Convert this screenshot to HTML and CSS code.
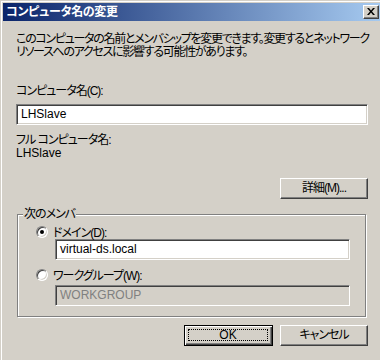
FILE: index.html
```html
<!DOCTYPE html>
<html lang="ja">
<head>
<meta charset="utf-8">
<link rel="stylesheet" href="styles.css">
</head>
<body>
<div class="window">
  <div class="titlebar">
    <span class="title">コンピュータ名の変更</span>
    <span class="close"><svg width="8" height="7" viewBox="0 0 8 7"><path d="M0 0L2 0L4 2.5L6 0L8 0L5 3.5L8 7L6 7L4 4.5L2 7L0 7L3 3.5Z" fill="#000"/></svg></span>
  </div>
  <div class="content">
    <p class="intro">このコンピュータの名前とメンバシップを変更できます。変更するとネットワーク<br>リソースへのアクセスに影響する可能性があります。</p>
    <div class="label lbl-c">コンピュータ名(C):</div>
    <div class="field">LHSlave</div>
    <div class="label lbl-full">フル コンピュータ名:</div>
    <div class="label latin">LHSlave</div>
    <div class="row-right detail-row">
      <div class="btn">詳細(M)...</div>
    </div>
    <div class="group">
      <span class="legend">次のメンバ</span>
      <div class="radio-row r1"><span class="radio checked"></span><span class="rlabel">ドメイン(D):</span></div>
      <div class="field sub">virtual-ds.local</div>
      <div class="radio-row r2"><span class="radio"></span><span class="rlabel">ワークグループ(W):</span></div>
      <div class="field sub disabled">WORKGROUP</div>
    </div>
    <div class="row-right buttons">
      <div class="btn default"><span class="focus">OK</span></div>
      <div class="btn">キャンセル</div>
    </div>
  </div>
</div>
</body>
</html>
```
FILE: styles.css
```css
html, body {
  margin: 0;
  padding: 0;
  width: 380px;
  height: 360px;
  overflow: hidden;
  background: #d4d0c8;
}
.window {
  box-sizing: border-box;
  width: 380px;
  height: 360px;
  overflow: hidden;
  background: #d4d0c8;
  border-top: 1px solid #d4d0c8;
  border-left: 1px solid #d4d0c8;
  box-shadow: inset 1px 1px 0 #ffffff;
  padding: 2px 0 0 2px;
  font-family: "Liberation Sans", "Noto Sans CJK JP", sans-serif;
  font-size: 12px;
  font-feature-settings: "palt";
  letter-spacing: -1px;
  color: #000;
}
.titlebar {
  height: 18px;
  width: 377px;
  background: linear-gradient(to right, #0a246a, #a6caf0);
  display: flex;
  align-items: center;
  padding: 0 0 0 3px;
  box-sizing: border-box;
}
.title {
  color: #fff;
  font-weight: bold;
  font-size: 12px;
  line-height: 18px;
  letter-spacing: -0.3px;
}
.close {
  margin-left: auto;
  margin-right: 1px;
  width: 16px;
  height: 14px;
  box-sizing: border-box;
  background: #d4d0c8;
  border-top: 1px solid #fff;
  border-left: 1px solid #fff;
  border-right: 1px solid #404040;
  border-bottom: 1px solid #404040;
  box-shadow: inset -1px -1px 0 #808080;
  display: flex;
  align-items: center;
  justify-content: center;
}
.close svg { display: block; margin: 0 1px 1px 0; }
.content {
  margin-left: 13px;
  width: 352px;
}
.intro {
  margin: 12px 0 0 0;
  line-height: 13px;
  white-space: nowrap;
  letter-spacing: -1.3px;
}
.label {
  line-height: 13px;
  white-space: nowrap;
}
.latin { letter-spacing: 0; }
.lbl-c { margin-top: 26px; }
.lbl-full { margin-top: 9px; }
.field {
  box-sizing: border-box;
  height: 21px;
  margin-top: 6px;
  width: 352px;
  background: #fff;
  border-top: 1px solid #808080;
  border-left: 1px solid #808080;
  border-right: 1px solid #fff;
  border-bottom: 1px solid #fff;
  box-shadow: inset 1px 1px 0 #404040, inset -1px -1px 0 #d4d0c8;
  padding: 0 4px;
  line-height: 19px;
  white-space: nowrap;
  letter-spacing: 0;
}
.row-right {
  display: flex;
  justify-content: flex-end;
  gap: 7px;
}
.detail-row { margin-top: 18px; }
.btn {
  box-sizing: border-box;
  width: 88px;
  height: 21px;
  background: #d4d0c8;
  border-top: 1px solid #fff;
  border-left: 1px solid #fff;
  border-right: 1px solid #404040;
  border-bottom: 1px solid #404040;
  box-shadow: inset -1px -1px 0 #808080;
  display: flex;
  align-items: center;
  justify-content: center;
  line-height: 13px;
}
.btn.default {
  width: 89px;
  border: 1px solid #000;
  box-shadow: inset 1px 1px 0 #fff, inset -1px -1px 0 #404040, inset -2px -2px 0 #808080;
  padding: 3px 4px 4px 3px;
  letter-spacing: 0;
}
.focus {
  display: flex;
  align-items: center;
  justify-content: center;
  width: 100%;
  height: 100%;
  box-sizing: border-box;
  border: 1px dotted #000;
}
.group {
  position: relative;
  box-sizing: border-box;
  margin-top: 15px;
  margin-left: 1px;
  width: 349px;
  height: 103px;
  border: 1px solid #808080;
  box-shadow: inset 1px 1px 0 #fff, 1px 1px 0 #fff;
  padding: 0 15px 0 18px;
}
.legend {
  position: absolute;
  top: -7px;
  left: 5px;
  padding: 0 1px;
  background: #d4d0c8;
  line-height: 13px;
}
.radio-row {
  display: flex;
  align-items: center;
  height: 13px;
}
.r1 { margin-top: 10px; }
.r2 { margin-top: 8px; }
.radio {
  position: relative;
  box-sizing: border-box;
  width: 12px;
  height: 12px;
  border-radius: 50%;
  background: #fff;
  border: 1px solid;
  border-color: #808080 #fff #fff #808080;
  box-shadow: inset 1px 1px 0 #404040, inset -1px -1px 0 #d4d0c8;
  margin-right: 5px;
}
.radio.checked::after {
  content: "";
  position: absolute;
  left: 3px;
  top: 3px;
  width: 4px;
  height: 4px;
  border-radius: 50%;
  background: #000;
}
.field.sub {
  width: 295px;
  margin-left: 19px;
  margin-top: 1px;
}
.field.sub.disabled {
  margin-top: 4px;
  background: #d4d0c8;
  color: #808080;
}
.buttons { margin-top: 8px; }
```
